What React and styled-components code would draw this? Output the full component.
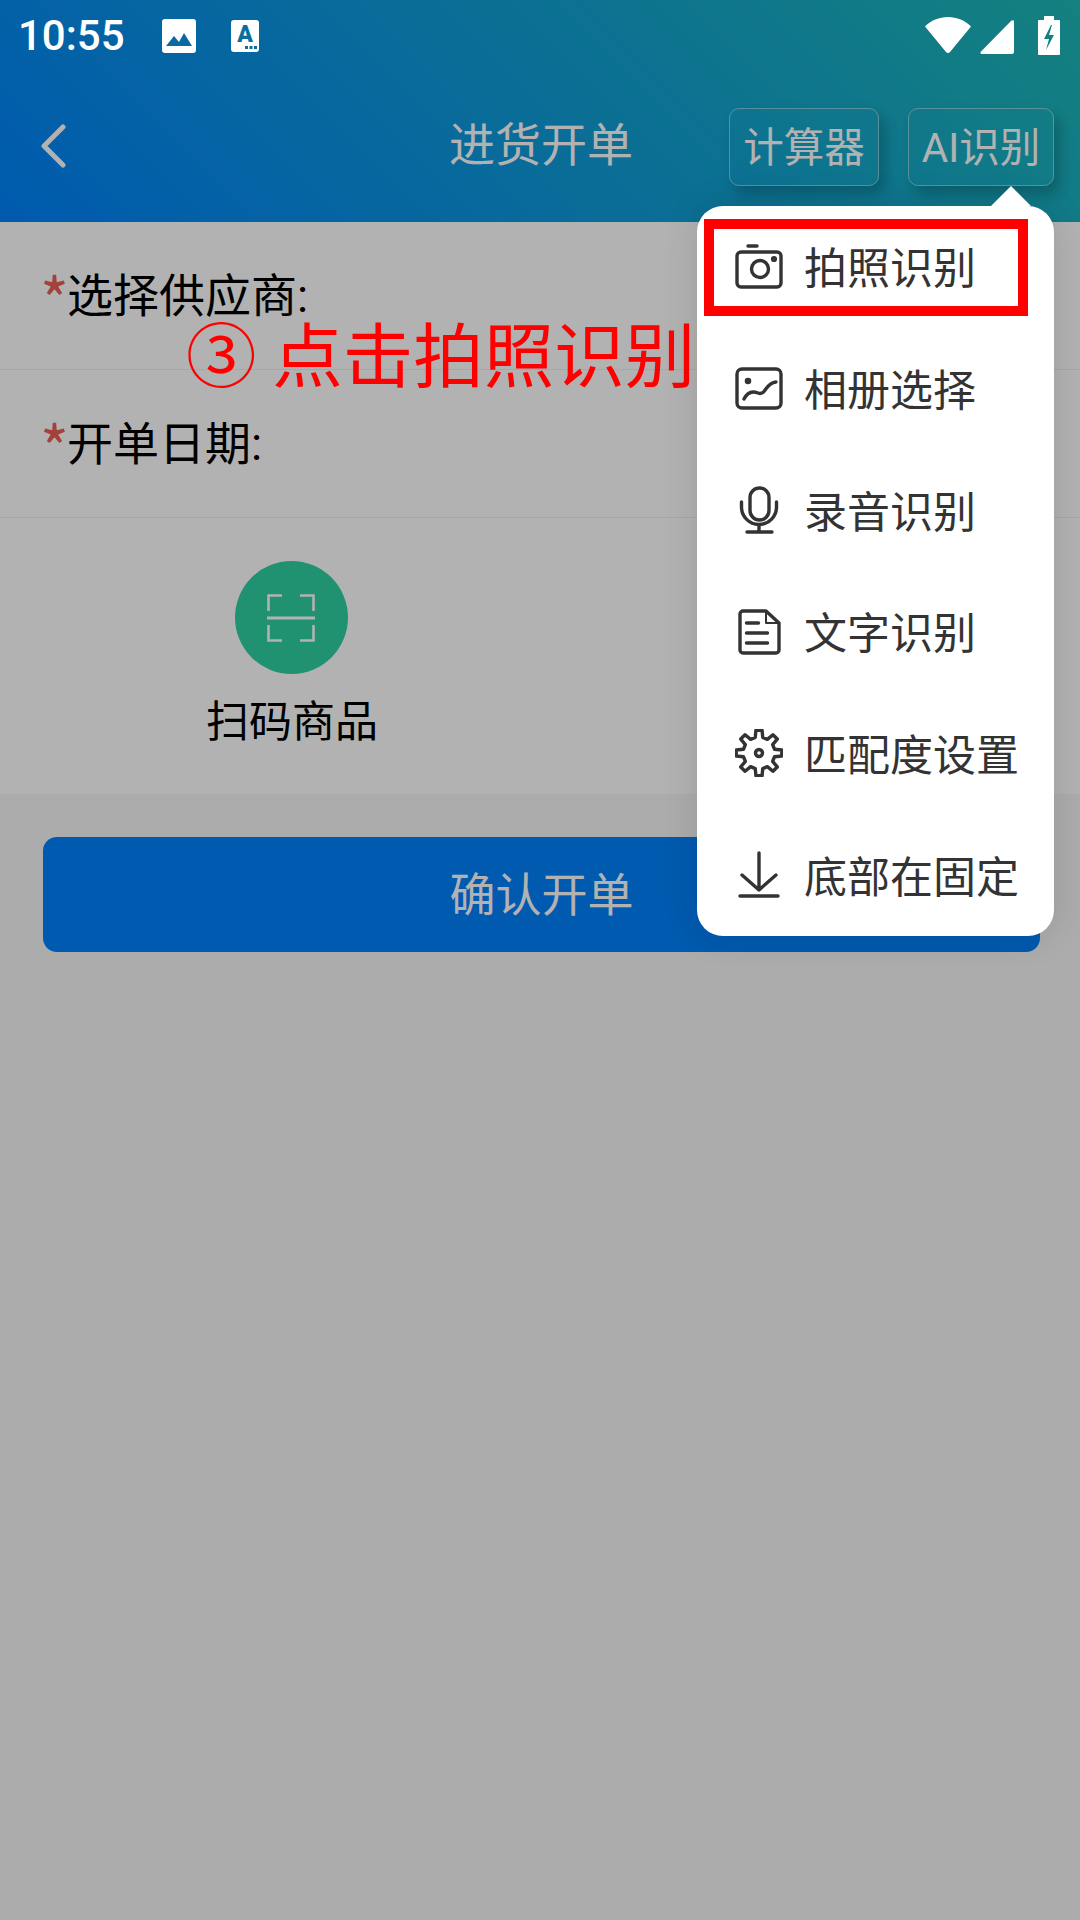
import React from "react";
import styled, { createGlobalStyle } from "styled-components";

const GlobalStyle = createGlobalStyle`
  html, body {
    margin: 0;
    padding: 0;
    background: #f7f7f7;
  }
  * {
    box-sizing: border-box;
  }
`;

const Screen = styled.div`
  position: relative;
  width: 1080px;
  height: 1920px;
  overflow: hidden;
  background: #f7f7f7;
  font-family: Roboto, "Noto Sans CJK SC", sans-serif;
`;

const Header = styled.header`
  height: 222px;
  padding-top: 70px;
  background: linear-gradient(45deg, #0082fb, #1eb9b6);
`;

const Nav = styled.div`
  height: 152px;
  display: grid;
  grid-template-columns: 1fr auto 1fr;
  align-items: center;
  padding: 0 26px;
`;

const Back = styled.svg`
  display: block;
  width: 26px;
  height: 44px;
  margin-left: 15px;
  fill: none;
  stroke: #fff;
  stroke-width: 5;
  stroke-linecap: round;
  stroke-linejoin: round;
`;

const Title = styled.div`
  font-size: 46px;
  color: #fff;
  line-height: 60px;
  padding: 0 0 2px 2px;
`;

const Actions = styled.div`
  display: flex;
  justify-content: flex-end;
  gap: 29px;
  padding-top: 1px;
`;

const NavButton = styled.div`
  height: 78px;
  width: ${(p) => p.$width}px;
  display: flex;
  align-items: center;
  justify-content: center;
  padding-bottom: 4px;
  border: 1px solid rgba(255, 255, 255, 0.45);
  border-radius: 10px;
  color: #fff;
  font-size: 40.500px;
  box-shadow: 6px 8px 14px rgba(0, 0, 0, 0.22);
`;

const FormRow = styled.div`
  height: 148px;
  display: flex;
  align-items: center;
  padding: 0 0 8px 40px;
  background: #fff;
  border-bottom: 1px solid #f0f0f0;
  font-size: 46px;
  color: #000;
`;

const Star = styled.span`
  color: #eb5e53;
  font-family: "Noto Sans CJK SC", sans-serif;
  font-size: 62px;
  line-height: 60px;
  width: 27px;
  margin-top: 10px;
`;

const ActionPanel = styled.div`
  height: 276px;
  padding: 43px 0 0 208px;
  background: #fff;
`;

const ScanItem = styled.div`
  width: 168px;
  display: flex;
  flex-direction: column;
  align-items: center;
`;

const ScanCircle = styled.div`
  width: 113px;
  height: 113px;
  margin-right: 2px;
  border-radius: 50%;
  background: #2ed1a4;
  display: flex;
  align-items: center;
  justify-content: center;
`;

const ScanLabel = styled.div`
  margin-top: 20px;
  font-size: 43px;
  line-height: 56px;
  white-space: nowrap;
  color: #000;
`;

const ConfirmButton = styled.div`
  height: 115px;
  margin: 43px 40px 0 43px;
  padding-bottom: 8px;
  border-radius: 14px;
  background: #0081fb;
  color: #fff;
  font-size: 46px;
  display: flex;
  align-items: center;
  justify-content: center;
`;

const Scrim = styled.div`
  position: absolute;
  inset: 0;
  background: rgba(0, 0, 0, 0.3);
`;

const StatusBar = styled.div`
  position: absolute;
  top: 0;
  left: 0;
  right: 0;
  height: 70px;
  display: flex;
  align-items: center;
  padding: 0 20px 0 18px;
  color: #fff;
`;

const Clock = styled.div`
  font-family: Roboto, sans-serif;
  font-size: 42px;
  font-weight: 500;
  margin-right: 37px;
`;

const StatusIcon = styled.svg`
  display: block;
  flex: none;
  margin-left: ${(p) => p.$gap || 0}px;
  margin-top: ${(p) => p.$drop || 0}px;
`;

const Spacer = styled.div`
  flex: 1;
`;

const Popover = styled.div`
  position: absolute;
  top: 206px;
  left: 697px;
  width: 357px;
  height: 730px;
  display: grid;
  grid-auto-rows: 1fr;
  background: #fff;
  border-radius: 26px;
  box-shadow: 0 0 36px rgba(0, 0, 0, 0.12);
  &::before {
    content: "";
    position: absolute;
    top: -20px;
    right: 23px;
    border-left: 20px solid transparent;
    border-right: 20px solid transparent;
    border-bottom: 20px solid #fff;
  }
`;

const MenuItem = styled.div`
  display: flex;
  align-items: center;
  gap: 21px;
  padding-left: 38px;
  font-size: 43px;
  color: #333;
`;

const MenuLabel = styled.span`
  padding-bottom: 3px;
  white-space: nowrap;
`;

const MenuIcon = styled.svg`
  display: block;
  flex: none;
  width: 48px;
  height: 48px;
  fill: none;
  stroke: #333;
  stroke-width: 3.4;
  stroke-linecap: round;
  stroke-linejoin: round;
`;

const Highlight = styled.div`
  position: absolute;
  top: 13px;
  left: 7px;
  width: 324px;
  height: 97px;
  border: 10px solid #f00;
`;

const Callout = styled.div`
  position: absolute;
  top: 301px;
  left: 186px;
  white-space: nowrap;
  font-family: "Noto Sans CJK SC", sans-serif;
  font-size: 70.500px;
  line-height: 100px;
  color: #f00;
`;

const gearPath = () => {
  const pts = [];
  const teeth = 8;
  for (let i = 0; i < teeth; i++) {
    const a = (i / teeth) * Math.PI * 2 - Math.PI / 2;
    const step = (Math.PI * 2) / teeth;
    [
      [a - step * 0.17, 23],
      [a + step * 0.17, 23],
      [a + step * 0.3, 16],
      [a + step * 0.7, 16],
    ].forEach(([t, r]) => {
      pts.push(`${(24 + r * Math.cos(t)).toFixed(2)} ${(24 + r * Math.sin(t)).toFixed(2)}`);
    });
  }
  return `M${pts.join("L")}Z`;
};

const menu = [
  {
    label: "拍照识别",
    icon: (
      <>
        <rect x="2" y="9" width="44" height="35" rx="4" />
        <path d="M13 3h9" />
        <circle cx="25" cy="26" r="8.5" />
        <circle cx="39" cy="16" r="1.4" />
      </>
    ),
  },
  {
    label: "相册选择",
    icon: (
      <>
        <rect x="2" y="5" width="44" height="39" rx="5" />
        <circle cx="13" cy="17" r="1.6" />
        <path d="M9 35c4-8 9-8 14-6 8 3 7-10 18-11" />
      </>
    ),
  },
  {
    label: "录音识别",
    icon: (
      <>
        <rect x="15" y="2" width="19" height="32" rx="9.5" />
        <path d="M6.500 16v5a17.500 17.500 0 0 0 35 0v-5" />
        <path d="M24 39v7M12 46h25" />
      </>
    ),
  },
  {
    label: "文字识别",
    icon: (
      <>
        <path d="M8 3h23l13 12v27a3 3 0 0 1-3 3H8a3 3 0 0 1-3-3V6a3 3 0 0 1 3-3z" />
        <path d="M31 3v12h13" strokeWidth="2" />
        <path d="M11.500 15h12M11.500 25h21M11.500 35h21" />
      </>
    ),
  },
  {
    label: "匹配度设置",
    icon: (
      <>
        <path d={gearPath()} />
        <circle cx="24" cy="24" r="3.5" />
      </>
    ),
  },
  {
    label: "底部在固定",
    icon: (
      <>
        <path d="M24 2v37M7 24l17 15 17-15" />
        <path d="M5 45h38" />
      </>
    ),
  },
];

const App = () => {
  return (
    <Screen>
      <GlobalStyle />
      <Header>
        <Nav>
          <Back viewBox="0 0 26 44">
            <path d="M22 3L3 22l19 19" />
          </Back>
          <Title>进货开单</Title>
          <Actions>
            <NavButton $width={150}>计算器</NavButton>
            <NavButton $width={146}>AI识别</NavButton>
          </Actions>
        </Nav>
      </Header>
      <FormRow>
        <Star>*</Star>选择供应商:
      </FormRow>
      <FormRow>
        <Star>*</Star>开单日期:
      </FormRow>
      <ActionPanel>
        <ScanItem>
          <ScanCircle>
            <svg width="48" height="48" viewBox="0 0 48 48" fill="none" stroke="#fff" strokeWidth="2.6">
              <path d="M15 1.500H1.500V17M33 1.500h13.500V17M15 46.500H1.500V31M33 46.500h13.500V31" />
              <path d="M0 24h48" strokeWidth="3" />
            </svg>
          </ScanCircle>
          <ScanLabel>扫码商品</ScanLabel>
        </ScanItem>
      </ActionPanel>
      <ConfirmButton>确认开单</ConfirmButton>
      <Scrim />
      <StatusBar>
        <Clock>10:55</Clock>
        <StatusIcon $drop={2} width="34" height="34" viewBox="0 0 34 34">
          <rect width="34" height="34" rx="3" fill="#fff" />
          <path d="M4 27l8-10 5 6 5-9 8 13z" fill="#0a69a2" />
        </StatusIcon>
        <StatusIcon $gap={35} $drop={2} width="28" height="32" viewBox="0 0 28 32">
          <rect width="28" height="32" rx="3" fill="#fff" />
          <text x="14" y="22" textAnchor="middle" fontFamily="Roboto, sans-serif" fontWeight="900" fontSize="23" fill="#0a6ea0">
            A
          </text>
          <path d="M14 26h3v3h-3zM18.500 26h3v3h-3zM23 26h3v3h-3z" fill="#0a6ea0" />
        </StatusIcon>
        <Spacer />
        <StatusIcon width="46" height="36" viewBox="0 0 46 36">
          <path d="M0 9.500C6 3.500 14 0 23 0s17 3.500 23 9.500L25 35c-1 1.300-3 1.300-4 0z" fill="#fff" />
        </StatusIcon>
        <StatusIcon $gap={9} $drop={4} width="34" height="34" viewBox="0 0 34 34">
          <path d="M34 1v31a2 2 0 0 1-2 2H2c-1.500 0-2-1.500-1-2.500L31 1c1.200-1.200 3-.8 3 0z" fill="#fff" />
        </StatusIcon>
        <StatusIcon $gap={24} width="22" height="39" viewBox="0 0 22 39">
          <path
            fillRule="evenodd"
            fill="#fff"
            d="M6 0h10v4h5a1 1 0 0 1 1 1v33a1 1 0 0 1-1 1H1a1 1 0 0 1-1-1V5a1 1 0 0 1 1-1h5zM13 9l-7 14h5l-3 11 8-15h-5l3-10z"
          />
        </StatusIcon>
      </StatusBar>
      <Callout>③ 点击拍照识别</Callout>
      <Popover>
        {menu.map((item) => (
          <MenuItem key={item.label}>
            <MenuIcon viewBox="0 0 48 48">{item.icon}</MenuIcon>
            <MenuLabel>{item.label}</MenuLabel>
          </MenuItem>
        ))}
        <Highlight />
      </Popover>
    </Screen>
  );
};

export default App;
